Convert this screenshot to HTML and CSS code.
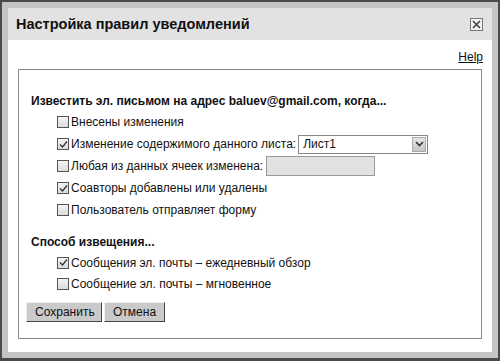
FILE: index.html
```html
<!DOCTYPE html>
<html lang="ru">
<head>
    <meta charset="UTF-8">
    <title>Настройка правил уведомлений</title>
    <link rel="stylesheet" href="styles.css">
</head>
<body>
    <div class="dialog">
        <div class="panel">
            <div class="title-bar">
                <h1>Настройка правил уведомлений</h1>
                <span class="close-btn">
                    <svg width="9" height="9" viewBox="0 0 9 9"><path d="M1 1L8 8M8 1L1 8" stroke="#444" stroke-width="1.6"/></svg>
                </span>
            </div>
            <div class="help-row"><a href="#" class="help-link">Help</a></div>
            <div class="rules-box">
                <div class="section-title">Известить эл. письмом на адрес baluev@gmail.com, когда...</div>
                <div class="option-list">
                    <div class="option"><span class="check"></span><span>Внесены изменения</span></div>
                    <div class="option">
                        <span class="check"><svg width="9" height="9" viewBox="0 0 9 9"><path d="M1 4.5L3.5 7L8 1.5" fill="none" stroke="#333" stroke-width="1.3"/></svg></span>
                        <span>Изменение содержимого данного листа:</span>
                        <span class="select">
                            <span class="select-value">Лист1</span>
                            <span class="select-arrow"><svg width="9" height="6" viewBox="0 0 9 6"><path d="M1 1L4.5 4.5L8 1" fill="none" stroke="#333" stroke-width="1.6"/></svg></span>
                        </span>
                    </div>
                    <div class="option"><span class="check"></span><span>Любая из данных ячеек изменена:</span><span class="text-field"></span></div>
                    <div class="option">
                        <span class="check"><svg width="9" height="9" viewBox="0 0 9 9"><path d="M1 4.5L3.5 7L8 1.5" fill="none" stroke="#333" stroke-width="1.3"/></svg></span>
                        <span>Соавторы добавлены или удалены</span>
                    </div>
                    <div class="option"><span class="check"></span><span>Пользователь отправляет форму</span></div>
                </div>

                <div class="section-title second">Способ извещения...</div>
                <div class="option-list compact">
                    <div class="option">
                        <span class="check"><svg width="9" height="9" viewBox="0 0 9 9"><path d="M1 4.5L3.5 7L8 1.5" fill="none" stroke="#333" stroke-width="1.3"/></svg></span>
                        <span>Сообщения эл. почты – ежедневный обзор</span>
                    </div>
                    <div class="option"><span class="check"></span><span>Сообщение эл. почты – мгновенное</span></div>
                </div>

                <div class="buttons">
                    <button type="button" class="btn save">Сохранить</button>
                    <button type="button" class="btn">Отмена</button>
                </div>
            </div>
        </div>
    </div>
</body>
</html>
```

FILE: styles.css
```css
body {
    margin: 0;
    font-family: "Liberation Sans", Arial, sans-serif;
    color: #111;
}
.dialog {
    width: 500px;
    height: 361px;
    box-sizing: border-box;
    border: 2px solid #4a4a4a;
    border-bottom-width: 3px;
    background: #c4c4c4;
    padding: 6px;
}
.panel {
    background: #fff;
    height: 100%;
}
.title-bar {
    display: flex;
    align-items: center;
    justify-content: space-between;
    height: 32px;
    background: #e2e2e2;
    padding: 0 9px 0 8px;
}
h1 {
    margin: 0;
    font-size: 14.5px;
    font-weight: bold;
    color: #111;
}
.close-btn {
    display: flex;
    align-items: center;
    justify-content: center;
    width: 11px;
    height: 11px;
    border: 1px solid #777;
    background: #f2f2f2;
}
.help-row {
    display: flex;
    justify-content: flex-end;
    padding: 10px 9px 0 0;
    height: 12px;
    line-height: 14px;
}
.help-link {
    font-size: 12px;
    color: #111;
    text-decoration: underline;
}
.rules-box {
    margin: 7px 10px 0 10px;
    border: 1px solid #8a8a8a;
    padding: 21px 7px 16px 7px;
    font-size: 12px;
}
.section-title {
    font-weight: bold;
    line-height: 20px;
    margin-left: 5px;
}
.section-title.second {
    margin-top: 11px;
}
.option-list {
    padding-left: 31px;
}
.option {
    display: flex;
    align-items: center;
    height: 22px;
}
.compact .option {
    height: 21px;
}
.check {
    display: inline-flex;
    align-items: center;
    justify-content: center;
    width: 10px;
    height: 10px;
    border: 1px solid #555;
    background: linear-gradient(#f4f4f4, #dcdcdc);
    margin-right: 2px;
    flex-shrink: 0;
}
.select {
    display: inline-flex;
    align-items: center;
    justify-content: space-between;
    width: 128px;
    height: 17px;
    border: 1px solid #888;
    margin-left: 2px;
    background: #fff;
}
.select-value {
    padding-left: 4px;
}
.select-arrow {
    display: flex;
    align-items: center;
    justify-content: center;
    width: 14px;
    height: 15px;
    margin-right: 1px;
    background: linear-gradient(#e6e6e6, #c6c6c6);
    border: 1px solid #aaa;
    box-sizing: border-box;
}
.text-field {
    display: inline-block;
    width: 107px;
    height: 18px;
    border: 1px solid #999;
    background: #e2e2e2;
    margin-left: 3px;
}
.buttons {
    display: flex;
    gap: 2px;
    margin-top: 8px;
}
.btn {
    font-family: "Liberation Sans", Arial, sans-serif;
    font-size: 12px;
    color: #111;
    height: 20px;
    padding: 0 8px;
    background: #cacaca;
    border: 1px solid;
    border-color: #eee #444 #444 #eee;
    cursor: pointer;
}
.btn.save {
    width: 76px;
}
```
